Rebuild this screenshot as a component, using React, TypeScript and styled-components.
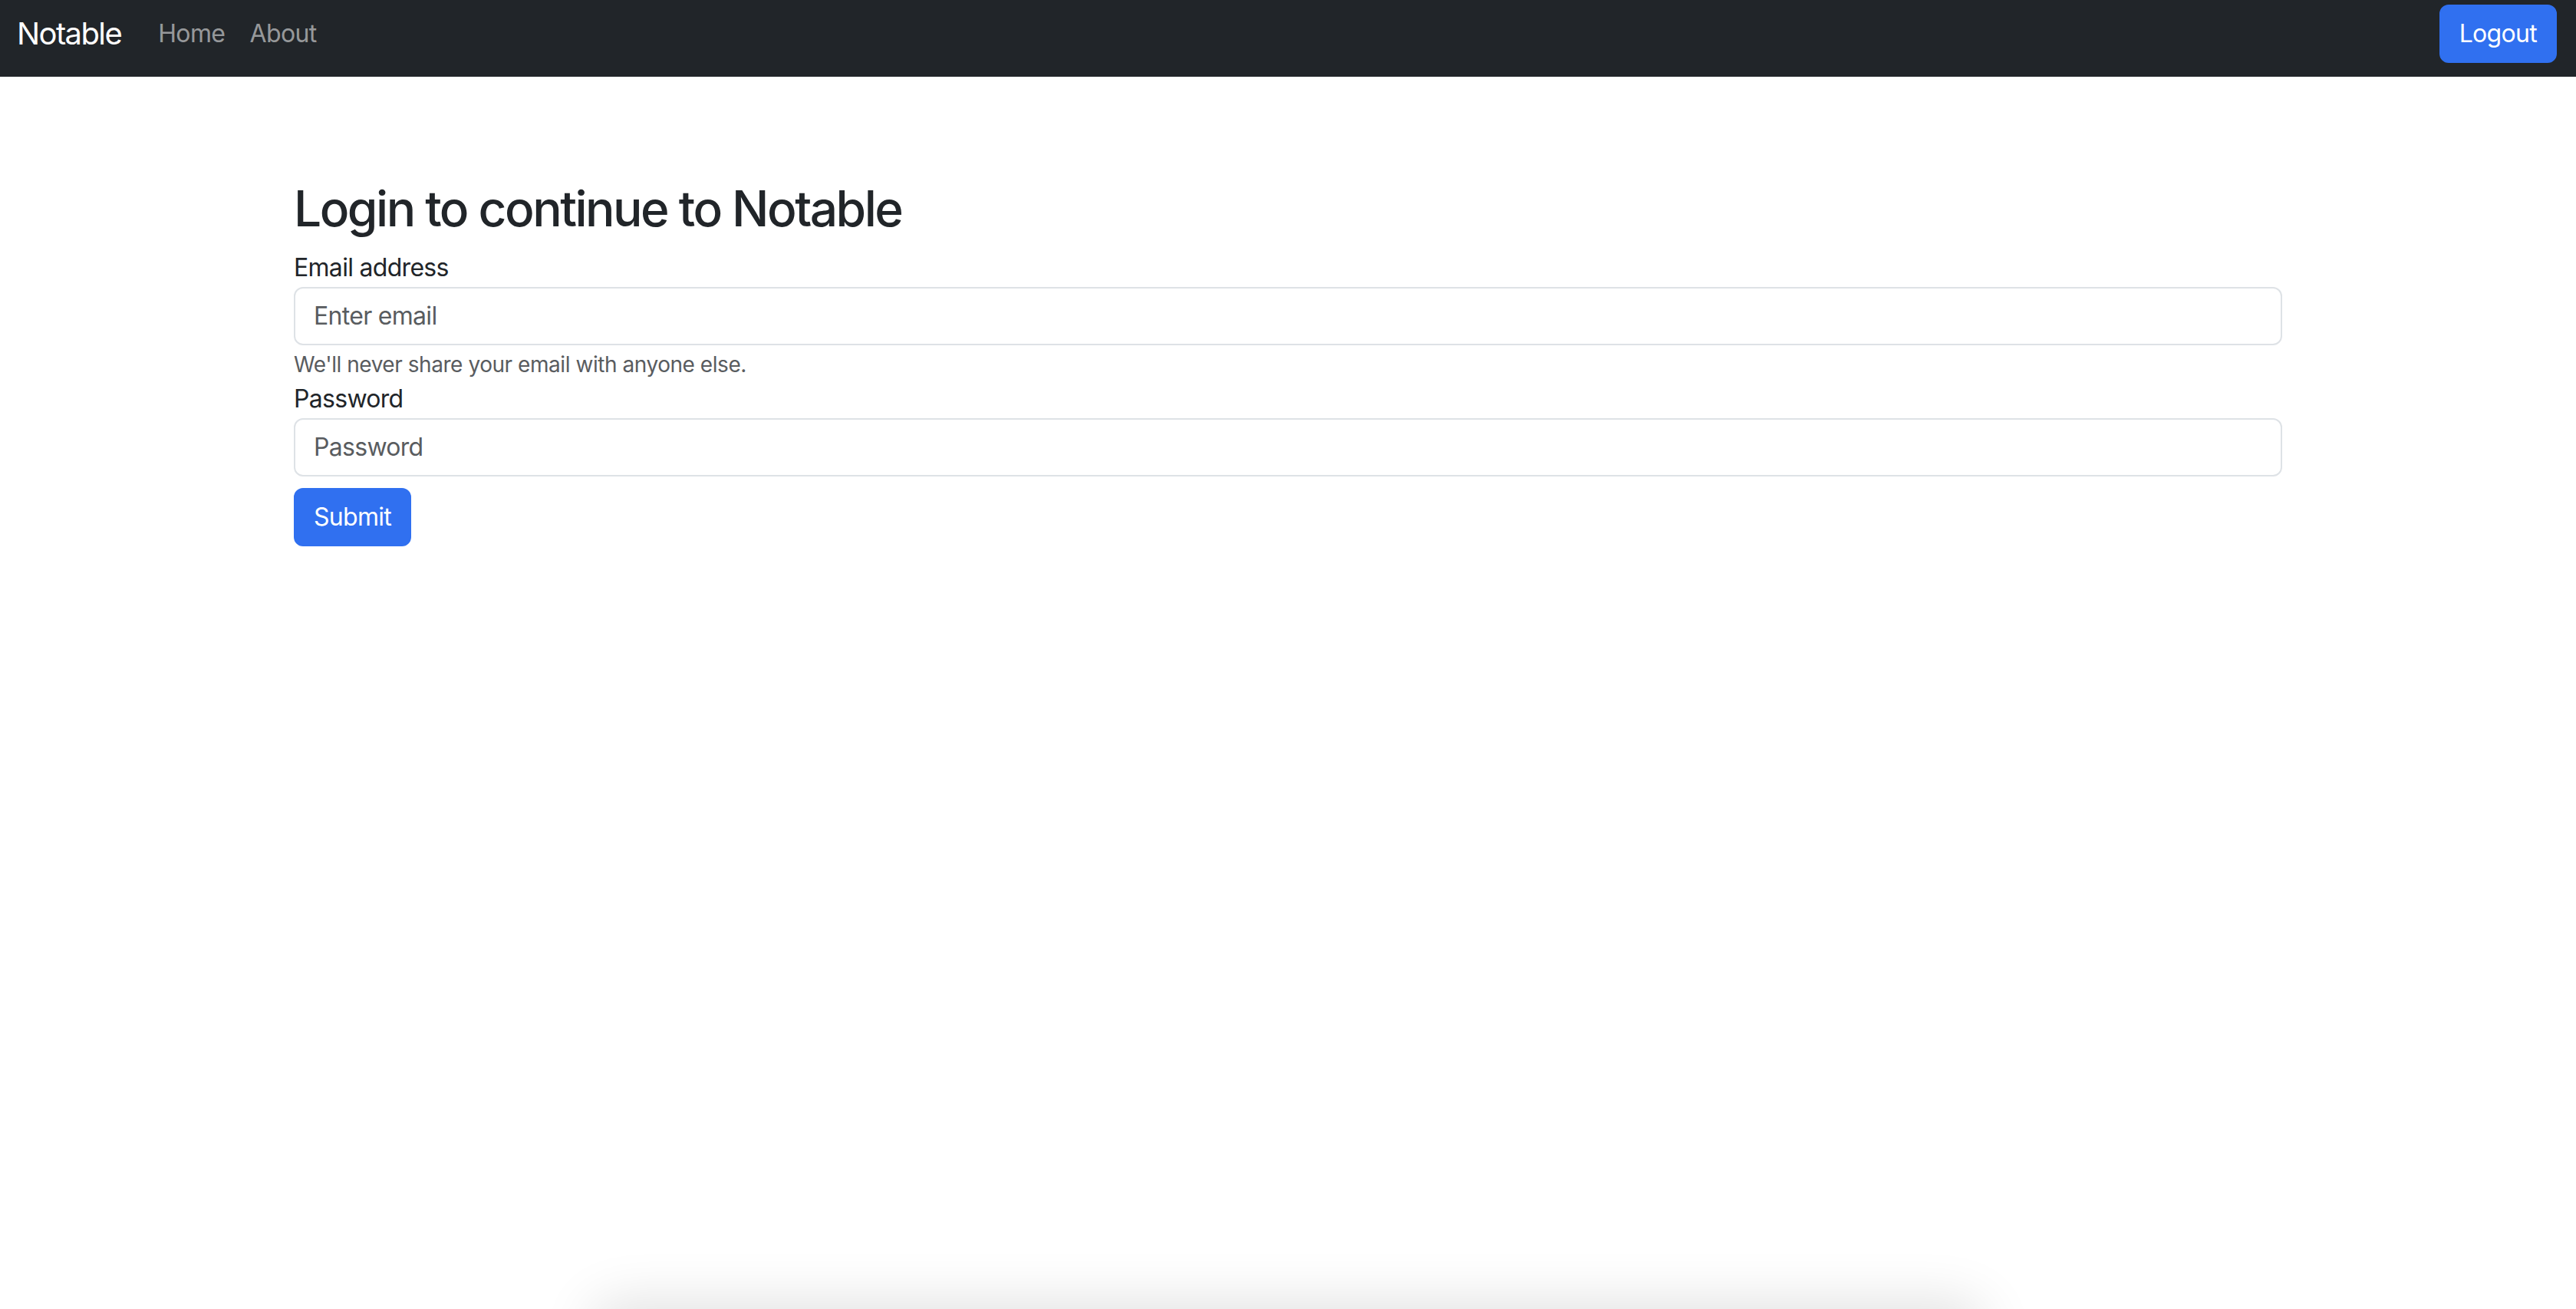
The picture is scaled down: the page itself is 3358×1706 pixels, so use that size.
import styled, { createGlobalStyle } from "styled-components";

const GlobalStyle = createGlobalStyle`
  html, body {
    margin: 0;
    padding: 0;
    background: #ffffff;
    color: #212529;
    font-family: Inter, "Noto Sans", "Liberation Sans", sans-serif;
  }
  * {
    box-sizing: border-box;
  }
`;

const Navbar = styled.nav`
  display: flex;
  align-items: center;
  height: 100px;
  padding: 0 25px 12px 22px;
  background-color: #212529;
`;

const Brand = styled.a`
  font-size: 40px;
  line-height: 1.5;
  letter-spacing: -1.6px;
  color: #ffffff;
  margin-right: 32px;
  text-decoration: none;
`;

const NavList = styled.div`
  display: flex;
  align-items: center;
`;

const NavLink = styled.a`
  padding: 0 16px;
  font-size: 32px;
  line-height: 1.5;
  letter-spacing: -0.6px;
  color: rgba(255, 255, 255, 0.55);
  text-decoration: none;
`;

const Button = styled.button<{ $push?: boolean }>`
  height: 76px;
  padding: 0 24px;
  border: 2px solid #3070f0;
  border-radius: 12px;
  background-color: #3070f0;
  color: #ffffff;
  font-family: inherit;
  font-size: 32px;
  line-height: 1.5;
  letter-spacing: -0.7px;
  cursor: pointer;
  margin-left: ${({ $push }) => ($push ? "auto" : "0")};
`;

const Container = styled.main`
  max-width: 2640px;
  margin: 0 auto;
  padding: 134px 24px 0;
`;

const Heading = styled.h2`
  margin: 0 0 14px;
  font-size: 64px;
  font-weight: 500;
  line-height: 1.2;
  letter-spacing: -2.5px;
`;

const Form = styled.form`
  display: flex;
  flex-direction: column;
  align-items: flex-start;
`;

const Label = styled.label<{ $gap?: number }>`
  display: block;
  margin-top: ${({ $gap }) => $gap ?? 0}px;
  margin-bottom: 1px;
  font-size: 32px;
  line-height: 1.5;
  letter-spacing: -0.7px;
`;

const Input = styled.input`
  display: block;
  width: 100%;
  height: 76px;
  padding: 12px 24px;
  border: 2px solid #dee2e6;
  border-radius: 12px;
  font-family: inherit;
  font-size: 32px;
  line-height: 1.5;
  letter-spacing: -0.7px;
  color: #212529;
  background: #ffffff;
  outline: none;

  &::placeholder {
    color: #595c5f;
  }
`;

const HelpText = styled.div`
  margin-top: 4px;
  font-size: 28px;
  line-height: 1.5;
  letter-spacing: -0.45px;
  color: #595c5f;
`;

const SubmitRow = styled.div`
  margin-top: 15px;
`;

const BottomShade = styled.div`
  position: fixed;
  left: 50%;
  bottom: -60px;
  width: 1800px;
  height: 60px;
  transform: translateX(-50%);
  border-radius: 30px;
  box-shadow: 0 0 70px 10px rgba(0, 0, 0, 0.12);
  background: #ffffff;
`;

export default function App() {
  return (
    <>
      <GlobalStyle />
      <Navbar>
        <Brand href="#">Notable</Brand>
        <NavList>
          <NavLink href="#">Home</NavLink>
          <NavLink href="#">About</NavLink>
        </NavList>
        <Button $push type="button">
          Logout
        </Button>
      </Navbar>
      <Container>
        <Heading>Login to continue to Notable</Heading>
        <Form onSubmit={(e) => e.preventDefault()}>
          <Label htmlFor="email">Email address</Label>
          <Input id="email" type="email" placeholder="Enter email" />
          <HelpText>We'll never share your email with anyone else.</HelpText>
          <Label htmlFor="password" $gap={0}>
            Password
          </Label>
          <Input id="password" type="password" placeholder="Password" />
          <SubmitRow>
            <Button type="submit">Submit</Button>
          </SubmitRow>
        </Form>
      </Container>
      <BottomShade />
    </>
  );
}
